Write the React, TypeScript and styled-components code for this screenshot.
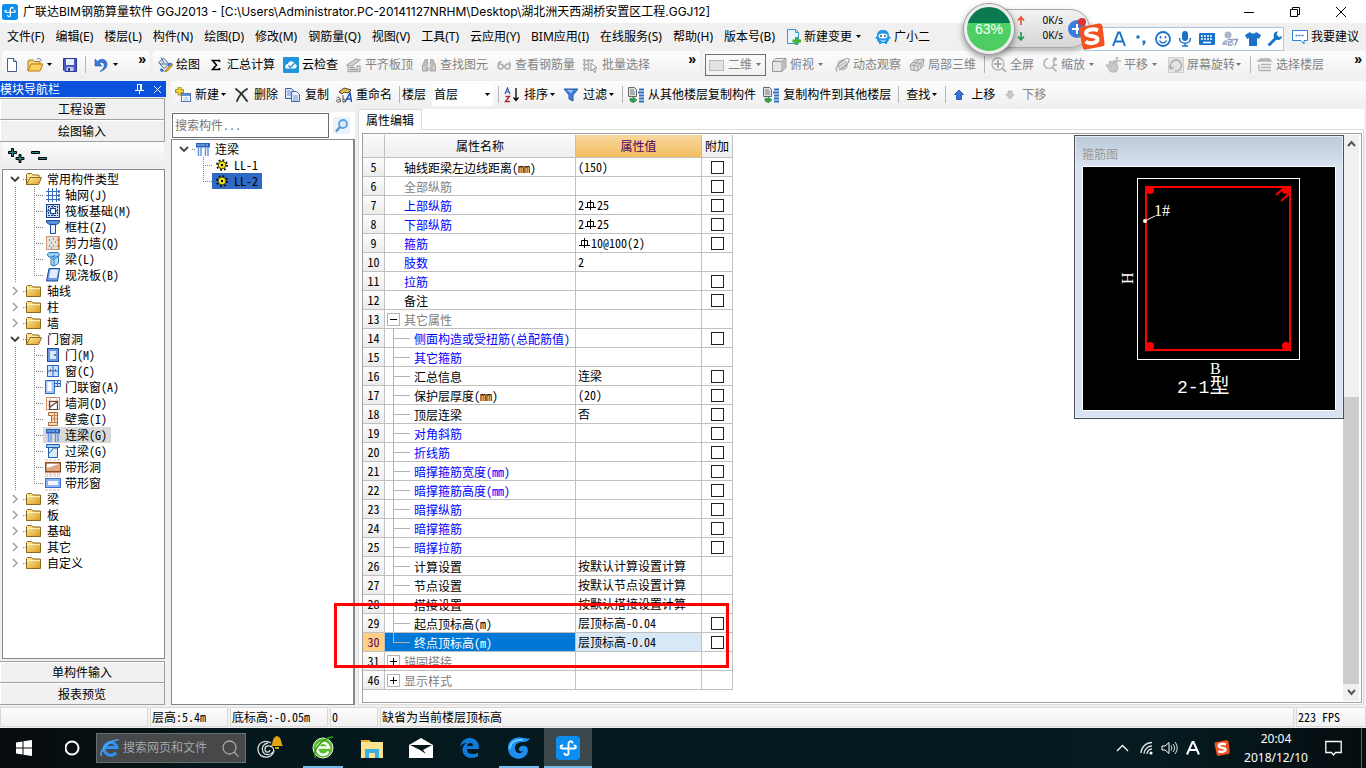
import React from 'react';
import styled, { createGlobalStyle, css } from 'styled-components';

const song = '"Noto Sans Mono CJK SC", "Noto Sans CJK SC", sans-serif';
const ui = '"Noto Sans", "Noto Sans CJK SC", sans-serif';
const caption = 'Inter, "Noto Sans CJK SC", sans-serif';

const GlobalStyle = createGlobalStyle`
  * { box-sizing: border-box; }
  body { margin: 0; background: #f0f0f0; font: 12px/16px ${ui}; color: #000; }
  button { font: inherit; color: inherit; background: none; border: 0; padding: 0; margin: 0; white-space: nowrap; }
  input, select { font: inherit; color: inherit; margin: 0; }
  ul { list-style: none; margin: 0; padding: 0; }
  svg { display: block; flex: none; }
`;

/* ---------- shell ---------- */
const Window = styled.div`
  position: relative; display: flex; flex-direction: column; height: 100vh; min-height: 768px; overflow: hidden;
`;
const TitleBar = styled.header`
  display: flex; align-items: center; height: 23px; padding: 0 2px; background: #fff; white-space: nowrap;
`;
const Title = styled.h1`
  flex: 1; margin: 0 0 0 5px; font: 400 12px/22px ${caption};
`;
const WindowButton = styled.button`
  display: flex; align-items: center; justify-content: center; width: 46px; height: 22px;
`;
const MenuBar = styled.nav`
  display: flex; align-items: center; gap: 11px; height: 27px; padding: 0 7px; white-space: nowrap;
`;
const MenuButton = styled.button<{ $push?: boolean }>`
  display: flex; align-items: center; gap: 3px; height: 22px;
  ${p => p.$push && 'margin-left: auto;'}
`;
const ToolbarRow = styled.div`
  display: flex; gap: 3px; height: 31px; padding: 1px 0 3px 2px;
`;
const Toolbar = styled.div<{ $basis?: number; $gap?: number; $pad?: number }>`
  display: flex; align-items: center; min-width: 0; overflow: hidden; white-space: nowrap;
  flex: ${p => (p.$basis ? `0 1 ${p.$basis}px` : '1')};
  gap: ${p => p.$gap ?? 8}px; padding: 0 4px 0 ${p => p.$pad ?? 4}px;
  background: linear-gradient(#fdfdfd, #efefef); border-radius: 3px;
`;
const ToolButton = styled.button<{ $gap?: number; $off?: boolean }>`
  display: flex; align-items: center; flex: none; gap: ${p => p.$gap ?? 3}px; height: 22px;
  color: ${p => (p.$off ? '#838383' : '#000')};
`;
const ViewMode = styled(ToolButton)`
  width: 61px; padding-left: 3px; border: 1px solid #6d6d6d; margin-right: -3px;
`;
const Divider = styled.i<{ $pull?: number }>`
  flex: none; width: 1px; height: 17px; background: #b5b5b5; margin-right: -${p => p.$pull ?? 3}px;
`;
const More = styled.button`
  align-self: flex-start; margin-left: auto; font: 700 14px/16px "Liberation Sans", sans-serif;
`;
const CaretBox = styled.i<{ $w: number }>`
  display: flex; flex: none; justify-content: center; width: ${p => p.$w}px; margin-left: -${p => (p.$w > 10 ? 3 : 4)}px;
`;
const Body = styled.div`
  display: flex; flex: 1; min-height: 0;
`;

/* ---------- left navigation ---------- */
const NavPanel = styled.aside`
  display: flex; flex-direction: column; flex: 0 0 166px; margin-right: 5px; font-family: ${song};
`;
const NavTitle = styled.div`
  display: flex; align-items: center; height: 16px; margin-bottom: 1px; color: #fff; background: #0a52dc;
  span { flex: 1; } button { width: 18px; display: flex; justify-content: center; }
`;
const NavButton = styled.button`
  flex: none; height: 22px; margin-right: 1px; line-height: 18px;
  border: 1px solid #a0a0a0; border-width: 1px 1px 1px 0; box-shadow: inset 1px 1px #fff; background: #f0f0f0;
  & + & { border-top: 0; }
`;
const NavTools = styled.div`
  display: flex; gap: 6px; align-items: center; flex: none; height: 26px; padding: 0 6px; margin: 0 2px;
  background: linear-gradient(#fcfcfc, #ececec);
`;
const TreeBox = styled.div`
  flex: 1; min-height: 0; margin: 1px 1px 2px 2px; padding-top: 1px; border: 1px solid #828790; background: #fff; overflow: hidden;
`;
const dotsY = 'repeating-linear-gradient(#808080 0 1px, transparent 1px 2px)';
const dotsX = 'repeating-linear-gradient(90deg, #808080 0 1px, transparent 1px 2px)';
const TreeRow = styled.li`
  display: flex; align-items: center; height: 16px; white-space: nowrap;
`;
const Toggle = styled.button`
  display: flex; align-items: center; justify-content: center; width: 20px; height: 16px; padding-left: 3px;
`;
const Stub = styled.i`
  width: 3px; height: 1px; background: ${dotsX};
`;
const Trunk = styled.i`
  width: 20px; height: 16px; background: ${dotsY} 12px 0 / 1px 16px no-repeat;
`;
const Branch = styled.i<{ $last?: boolean }>`
  width: 20px; height: 16px;
  background: ${dotsY} 11px 0 / 1px ${p => (p.$last ? 8 : 16)}px no-repeat, ${dotsX} 11px 8px / 9px 1px no-repeat;
`;
const TreeLabel = styled.button<{ $gap?: number; $bg?: string }>`
  display: flex; align-items: center; gap: ${p => p.$gap ?? 4}px; height: 16px; line-height: 16px; padding: 0 4px 0 2px;
  background: ${p => p.$bg ?? 'none'};
`;
const FolderLabel = styled(TreeLabel)`
  padding-left: 0;
`;

/* ---------- component list ---------- */
const Work = styled.main`
  position: relative; display: flex; flex-direction: column; flex: 1; min-width: 0;
`;
const WorkTools = styled.div`
  display: flex; height: 27px; flex: none; margin-bottom: 4px;
`;
const FloorLabel = styled.label`
  display: flex; align-items: center; gap: 6px; margin: 0 -2px 0 0;
`;
const FloorSelect = styled.select`
  appearance: none; width: 61px; height: 22px; padding: 0 2px; border: 0; border-radius: 0;
  background: #fff;
`;
const FloorWrap = styled.span`
  display: grid; align-items: center;
  > * { grid-area: 1 / 1; } > svg { justify-self: end; margin-right: 2px; pointer-events: none; }
`;
const Panels = styled.div`
  display: flex; flex: 1; min-height: 0;
`;
const ListPanel = styled.section`
  display: flex; flex-direction: column; flex: 0 0 184px; margin-right: 3px; font-family: ${song};
`;
const SearchRow = styled.div`
  display: flex; align-items: center; height: 27px; padding: 1px 0 1px 1px; background: #fff; gap: 4px;
`;
const SearchInput = styled.input`
  width: 157px; height: 25px; padding: 0 2px 3px; border: 1px solid #6e6e6e; border-radius: 0; outline: 0;
  &::placeholder { color: #767676; }
`;
const ListBox = styled.div`
  flex: 1; padding-top: 1px; border: 1px solid #828790; border-right-width: 2px; background: #fff;
`;

/* ---------- property editor ---------- */
const PropPanel = styled.section`
  display: flex; flex-direction: column; flex: 1; min-width: 0; margin-right: 2px; font-family: ${song};
`;
const Tabs = styled.div`
  display: flex; height: 20px; flex: none; margin-top: -3px;
`;
const Tab = styled.button`
  width: 64px; height: 21px; line-height: 18px; border: 1px solid #dcdcdc; border-bottom: 0; background: #fff; z-index: 1;
`;
const TabFill = styled.i`
  flex: 1; background: #fff;
`;
const TabPage = styled.div`
  display: flex; flex: 1; min-height: 0; padding: 3px 1px 1px 3px; border: 1px solid #dcdcdc; background: #fff;
`;
const GridBox = styled.div`
  display: flex; justify-content: space-between; flex: 1; padding: 1px 2px 1px 0; border: 1px solid #a0a0a0; overflow: hidden;
`;
const Table = styled.table`
  table-layout: fixed; width: 370px; height: 1px; border-collapse: separate; border-spacing: 0; flex: none; white-space: nowrap;
  td, th { height: 19px; padding: 0; line-height: 16px; font-weight: 400; border: solid #c0c0c0; border-width: 0 1px 1px 0; overflow: hidden; }
  thead th { height: 23px; background: linear-gradient(#fafafa, #efefef); }
`;
const ActiveHead = styled.th`
  && { background: linear-gradient(#f8d7a0, #f2bf60); color: #4c0060; }
`;
const RowHead = styled.th<{ $on?: boolean }>`
  ${p => (p.$on ? css`background: #ffcf85; color: #5a0060;` : css`background: linear-gradient(#fcfcfc, #ececec);`)}
`;
const NameCell = styled.td<{ $tone?: string; $on?: boolean }>`
  color: ${p => (p.$on ? '#fff' : p.$tone)};
  background: ${p => (p.$on ? '#0078d7' : '#fff')};
`;
const NameFlow = styled.div`
  display: flex; align-items: center; height: 18px; padding-top: 1px;
`;
const line = 'linear-gradient(#b4b4b4, #b4b4b4)';
const Indent = styled.i<{ $kind: 'none' | 'mid' | 'last' }>`
  flex: none; align-self: stretch; margin-top: -1px; width: ${p => (p.$kind === 'none' ? 19 : 29)}px;
  ${p => p.$kind !== 'none' && css`
    background: ${line} 8px 0 / 1px ${p.$kind === 'last' ? '10px' : '100%'} no-repeat, ${line} 8px 9px / 17px 1px no-repeat;
  `}
`;
const Expander = styled.button`
  flex: none; display: flex; align-items: center; justify-content: center; width: 13px; height: 13px;
  margin: 0 4px 0 2px; border: 1px solid #b4b4b4; background: #fff;
`;
const ValueCell = styled.td<{ $on?: boolean }>`
  background: ${p => (p.$on ? '#d9e8f7' : '#fff')};
  > div { display: flex; align-items: center; height: 18px; padding: 0 0 1px 2px; }
`;
const CheckCell = styled.td`
  background: #fff; text-align: center;
`;
const Check = styled.input`
  appearance: none; display: block; width: 13px; height: 13px; margin: 0 auto; border: 1px solid #222; background: #fff;
`;
const Scroll = styled.div`
  display: flex; flex-direction: column; width: 16px; background: #f0f0f0;
  button { display: flex; align-items: center; justify-content: center; height: 17px; }
`;
const ScrollGap = styled.i`flex: 245;`;
const ScrollThumb = styled.i`flex: 286; background: #cdcdcd;`;

/* ---------- floating pieces ---------- */
const StirrupWindow = styled.section`
  position: absolute; right: 22px; top: 54px; width: 270px; height: 284px; padding: 0 6px 7px 7px;
  display: flex; flex-direction: column; border: 1px solid #4a4f57; background: linear-gradient(#bccad9, #d8e3f1 32px);
  box-shadow: inset 0 0 0 1px #e6eef8;
  h2 { margin: 0; height: 30px; padding-top: 10px; font-size: 12px; line-height: 18px; font-weight: 400; color: #999; }
`;
const Highlight = styled.div`
  position: absolute; left: 163px; top: 522px; width: 395px; height: 65px; border: 3px solid #f00; pointer-events: none;
`;
const SpeedBall = styled.div`
  position: absolute; right: 276px; top: 3px; display: flex; align-items: center; width: 126px; height: 50px;
`;
const SpeedPill = styled.div`
  display: flex; align-items: center; justify-content: space-between; flex: 1; height: 39px; margin: 0 0 0 -28px; padding: 0 2px 0 30px;
  border: 1px solid #a6a6a6; border-radius: 20px; background: linear-gradient(#f2f2f2, #d6d6d6); box-shadow: 0 3px 6px #0004;
  font-size: 10px; line-height: 15px;
`;
const SpeedRows = styled.div`
  display: grid; grid-template-columns: 20px 26px; text-align: right; align-items: center;
`;
const Ball = styled.div`
  z-index: 1; display: flex; align-items: center; justify-content: center; flex: none; width: 50px; height: 50px; margin-top: 1px;
  border: 3px solid #eceeee; border-radius: 50%; color: #fff; font: 14px/16px "Liberation Sans", sans-serif;
  background: linear-gradient(#0b7a51 0 36%, #4bd267 36%, #4ecb61); box-shadow: 0 0 0 1px #9a9a9a, 0 3px 6px 1px #0006;
`;
const ImeBar = styled.div`
  position: absolute; right: 82px; top: 27px; display: flex; align-items: center; gap: 6px; width: 200px; height: 24px;
  padding-left: 26px; border: 1px solid #aac6de; background: #fff;
`;
const ImeLogo = styled.i`
  position: absolute; left: -7px; top: -5px;
`;

/* ---------- status and taskbar ---------- */
const StatusBar = styled.footer`
  display: flex; gap: 2px; flex: none; height: 23px; padding: 2px 0 1px; font-family: ${song}; white-space: nowrap;
`;
const StatusCell = styled.div<{ $w?: number }>`
  flex: ${p => (p.$w ? `0 0 ${p.$w}px` : '1')}; padding-left: 1px; line-height: 18px; border: 1px solid #d8d8d8;
  background: linear-gradient(#fcfcfc, #f1f1f1);
`;
const TaskBar = styled.footer`
  display: flex; align-items: center; flex: none; height: 40px; color: #fff;
  background: linear-gradient(90deg, #080b0d, #04181c 240px, #051b20 85%, #060d10);
`;
const TaskButton = styled.button<{ $on?: boolean; $run?: boolean }>`
  display: flex; align-items: center; justify-content: center; width: 48px; height: 40px; margin-right: 1px;
  background: ${p => (p.$on ? '#3a484c' : 'none')};
  ${p => p.$run && css`
    background-image: linear-gradient(#76b9ed, #76b9ed); background-repeat: no-repeat;
    background-position: 50% 38px; background-size: ${p.$on ? 48 : 40}px 2px;
  `}
`;
const TaskSearch = styled.label`
  display: flex; align-items: center; gap: 3px; width: 150px; height: 30px; margin: 0 4px 0 -2px; padding: 0 6px 0 3px;
  border: 1px solid #657173; background: #464849;
  input { flex: 1; min-width: 0; border: 0; background: none; outline: 0; padding: 0; }
  input::placeholder { color: #a4a6a7; opacity: 1; }
`;
const Tray = styled.div`
  display: flex; align-items: center; margin-left: auto; height: 40px; padding-right: 4px;
`;
const TrayButton = styled.button<{ $w: number }>`
  display: flex; align-items: center; justify-content: center; width: ${p => p.$w}px; height: 40px;
`;
const Clock = styled.time`
  width: 78px; margin-right: 2px; text-align: center; line-height: 19px;
`;
const DesktopEdge = styled.i`
  width: 1px; height: 40px; margin-left: 12px; background: #5b6468;
`;

/* ---------- icons ---------- */
const Svg = ({ w = 16, h = w, box, children }: { w?: number; h?: number; box?: string; children: React.ReactNode }) => (
  <svg width={w} height={h} viewBox={box ?? `0 0 ${w} ${h}`} fill="none" aria-hidden="true">{children}</svg>
);
const Caret = ({ w = 12, off }: { w?: number; off?: boolean }) => (
  <CaretBox $w={w}><Svg w={5} h={3}><path d="M0 0h5L2.5 3z" fill={off ? '#777' : '#000'} /></Svg></CaretBox>
);
const AppLogo = ({ size = 16 }: { size?: number }) => (
  <Svg w={size} box="0 0 24 24">
    <rect width="24" height="24" rx="4" fill="#0c8ef0" />
    <path d="M12.500 17.500V8c0-3 3-3.500 4-1.500M6.500 12.500h12M12.500 17c0 2.500-3.500 2.500-4 .5M6.500 12.500C4 12.500 4 9.500 6.500 9.500M18 12.500c2.500 0 2.500-2.500.5-3" stroke="#fff" strokeWidth="1.900" strokeLinecap="round" />
  </Svg>
);
const SogouLogo = ({ size = 27 }: { size?: number }) => (
  <Svg w={size} box="0 0 27 27">
    <path d="M3 4 21 .5q3-.5 3.500 2.500L26.500 20q.5 3-2.500 3.500L8 26.500q-3 .5-3.500-2.500L1 7Q.500 4.500 3 4z" fill="#f4511e" />
    <path d="M20 7.500C15 5 7.500 7 8 10.500c.5 3.500 11 1.500 11.500 5.500.4 4-8 5.500-12 2.500" stroke="#fff" strokeWidth="4" />
  </Svg>
);
const I = {
  newDoc: <Svg><path d="M3.500 1.500h6l3 3v10h-9z" fill="#fff" stroke="#4a5f86" /><path d="M9.500 1.500v3h3" fill="#cfe0f5" stroke="#4a5f86" /></Svg>,
  open: <Svg><path d="M1 14V4l1-1h4l1.500 1.500H13V7" fill="#f6d378" stroke="#b27c1b" /><path d="M1 14 4 7h12l-3 7z" fill="#fbd15f" stroke="#b27c1b" /><path d="M10 2c2-1 4 0 4.500 2" stroke="#4a74b8" /></Svg>,
  save: <Svg><path d="M1.500 1.500h13v13H3l-1.500-1.500z" fill="#4b59c5" stroke="#2d3792" /><rect x="4" y="2" width="8" height="6" fill="#e9eefb" /><rect x="4.500" y="10" width="7" height="4" fill="#c6cce8" /><rect x="6" y="11" width="2" height="3" fill="#2d3792" /></Svg>,
  undo: <Svg><path d="M2 2v7h7L6.500 6.500C9 4 12 6 11 9.500c-.5 2-2 3.500-4 5 4-1 7.500-4 7-8C13 1.500 7.500 1 4.500 4.500z" fill="#3a78d8" stroke="#2459ae" strokeWidth=".6" /></Svg>,
  paint: <Svg><path d="m1.500 5.500 5-4.500 5.500 6-5 4.500z" fill="#dfe8f4" stroke="#53698d" /><path d="M4 .500l3 5.500M3 7h8" stroke="#53698d" /><path d="m14.500 6-5 6-2 3 3.500-1.500L16 8z" fill="#e9b232" stroke="#8b6412" strokeWidth=".7" /><path d="M11 6c3-1 4 1 3 2l-2 2c-1-1-1-2-1-4z" fill="#3875cf" /><path d="M3 12c2-1 4 0 4 2l-2 1c-1 0-2-1-2-3z" fill="#3875cf" /></Svg>,
  sigma: <Svg><path d="M11.500 5V3.500H4.500L8.500 8l-4 4.500h7V11" stroke="#000" strokeWidth="1.600" /></Svg>,
  cloud: <Svg><rect width="16" height="16" rx="1" fill="#1f95dc" /><path d="M3 11.500c-2-2 0-5 2-4.500 1-4 6-3 6.500 0 3 0 3 4 0 4.500z" fill="#fff" /><path d="m5.500 8.500 2 2 3.500-4" stroke="#1f95dc" strokeWidth="1.500" /></Svg>,
  slab: <Svg><path d="m1 8 9-6 4 1-8 6zM2 9v5.500h12V9h-3v3" fill="#d6d6d6" stroke="#b0b0b0" strokeWidth="1.300" /><path d="M4 10.500h5M4 12.500h8" stroke="#9a9a9a" /></Svg>,
  binoc: <Svg><path d="M4 2.500h2.500V5L7 7v7H1.500V9zM12 2.500H9.500V5L9 7v7h5.500V9z" fill="#bcbcbc" stroke="#a8a8a8" /><path d="M7 7h2v3H7zM3 9.500v3M13 9.500v3" stroke="#eee" /></Svg>,
  glasses: <Svg><path d="M7 9.500a2.500 2.500 0 1 0-5 0 2.500 2.500 0 0 0 5 0zm7 0a2.500 2.500 0 1 0-5 0 2.500 2.500 0 0 0 5 0zM7 9h2M2 9.500c0-3 1.500-5 3.500-5M14 9.500c0-2 .5-4-1-5" stroke="#ababab" strokeWidth="1.400" /></Svg>,
  batch: <Svg><path d="M1.500 2v12M5.500 2v12M0 3.500h10M0 7.500h6M0 11.500h6M9.500 2v3" stroke="#adadad" strokeWidth="1.400" /><path d="m8 6 6 5-3 .5 2 3-1.500 1-2-3.500L8 14z" fill="#fff" stroke="#8f8f8f" /></Svg>,
  rect2d: <Svg><rect x=".5" y="3.500" width="14" height="10" fill="#e2e2e2" stroke="#b9b9b9" /></Svg>,
  cube: <Svg><path d="M1.500 4.500 5 1.500h10v9l-4 4h-9.500z" fill="#e5e5e5" stroke="#999" /><path d="M1.500 4.500H11v10M11 4.500l4-3" stroke="#999" /><path d="M11.500 5 15 2v8l-3.500 4z" fill="#bbb" /></Svg>,
  orbit: <Svg><circle cx="8.500" cy="8" r="5.500" fill="#c4c4c4" /><path d="M3.500 14C-2 13 9 1 14 1.500c4 .5-2 9-9 11.500" stroke="#a2a2a2" strokeWidth="1.200" /><path d="M5 8l6-4M6 11l6-5" stroke="#eee" /></Svg>,
  cube3: <Svg><path d="m1 8 5-5 9-1-1 7-5 5-7-1z" fill="#e0e0e0" stroke="#a0a0a0" /><path d="m1 8 8 1 6-7M9 9v5M5 8.500l5-6M3.500 5.500 12 6.500v5M5 8.500v5" stroke="#a0a0a0" /></Svg>,
  full: <Svg><circle cx="7" cy="7" r="6" stroke="#b0b0b0" strokeWidth="1.300" /><path d="M7 3v8M3 7h8M11.500 11.500l3.500 3.500" stroke="#a0a0a0" strokeWidth="1.600" /></Svg>,
  zoom: <Svg><circle cx="7" cy="6.500" r="5" stroke="#b5b5b5" strokeWidth="1.600" strokeDasharray="22 5" /><path d="m10.500 10.500 4 4M11 2h4M13 0v4M11 8h4" stroke="#b0b0b0" strokeWidth="1.600" /></Svg>,
  pan: <Svg><path d="M1 8c2-1 3 1 4 1l-1-4 2-1 2 3V4h2l1 4c3 0 2 5 0 7H6z" fill="#c9c9c9" stroke="#b5b5b5" /><path d="M12 0v8M8.500 4H16M10.500 1.500 12 0l1.500 1.500" stroke="#a8a8a8" /></Svg>,
  rotate: <Svg><rect x=".5" y=".5" width="15" height="15" fill="#e3e3e3" stroke="#d0d0d0" /><path d="M3 11a5.500 5.500 0 1 1 4 3M1 9l2 3 3-2" stroke="#aaa" strokeWidth="1.400" /></Svg>,
  floors: <Svg><path d="m1 4 3-2h8l2 2zM4 7.500h10M4 10.500h10M3 13.500h11M2 7.500V14" fill="#ccc" stroke="#b0b0b0" strokeWidth="1.400" /></Svg>,
  add: <Svg><rect x="6.500" y="6.500" width="9" height="8" fill="#fff" stroke="#5078b4" /><path d="M7 8h8" stroke="#5b92d8" strokeWidth="2" /><path d="M8 11h6M8 13h6M11 9v5" stroke="#b3c9e6" /><path d="M3 0h3v2.500h2.500v3H6V8H3V5.500H.500v-3H3z" fill="#f2d33b" stroke="#93791c" strokeWidth=".8" /></Svg>,
  del: <Svg><path d="M2 2c4 3 8 7 11 12M13 2C8 5 5 9 3 14" stroke="#333" strokeWidth="1.900" strokeLinecap="round" /></Svg>,
  copy: <Svg><path d="M.500 1.500h6l2 2v8h-8z" fill="#dce9fb" stroke="#3a62a8" /><path d="M6.500 4.500h5l3 3v7h-8z" fill="#eaf2fd" stroke="#3a62a8" /><path d="M8 9h5M8 11h5M8 13h5M2 4h3M2 6h4M2 8h4" stroke="#6a94d6" /></Svg>,
  rename: <Svg><path d="M3 5 8 1l7 2-3 3-4-1-2 2z" fill="#e7bc54" stroke="#4e4423" /><path d="M.500 11c3-2 4 0 4 4M4.500 13c-3-1-4 0-4 1s3 2 4 0M7 8v7c3 1 3-4 0-3" stroke="#555" /><path d="m9 15 5-9 1.500 9M11 12h4" stroke="#1f4fb2" strokeWidth="1.500" /></Svg>,
  sort: <Svg><path d="m1 7 2.500-6L6 7M2 5h3" stroke="#2f5aa8" strokeWidth="1.200" /><path d="M1.500 9.500h4l-4 5h4.500" stroke="#a82a2a" strokeWidth="1.400" /><path d="M12 1v12M9.500 10.500l2.500 3 2.500-3" stroke="#000" strokeWidth="1.300" /></Svg>,
  filter: <Svg><path d="M1 2h14L10 8v6l-4-2V8z" fill="#4480dc" stroke="#2455a8" /><path d="M4 3h6L8 6z" fill="#a9cbfa" /></Svg>,
  copyFrom: <Svg><path d="M.500.5h6l2 2v7h-8z" fill="#e4e4e4" stroke="#666" /><path d="M2 3h4M2 5h5M2 7h5" stroke="#777" /><path d="M2 11v2c0 2 2 2 3 2v1l4-3-4-3v2z" fill="#30a350" stroke="#19733a" strokeWidth=".6" /><path d="M11 2.500h5M10 5.500h6M11 8.500h5M11 11.500h5M11 14.500h5" stroke="#2f6fc0" strokeWidth="1.800" /></Svg>,
  up: <Svg><path d="m8 3 4.500 4.500H10.500v5h-5v-5H3.500z" fill="#3672dd" stroke="#1c469c" strokeWidth=".8" /></Svg>,
  down: <Svg><path d="m8 12 4-4.500h-2V4H6v3.500H4z" fill="#c9c9c9" stroke="#b2b2b2" strokeWidth=".8" /></Svg>,
  change: <Svg w={15} h={16}><path d="M1.500.5h8l3 3v11h-11z" fill="#e8f5fd" stroke="#3597d3" /><path d="M9.500.5v3h3" stroke="#3597d3" /><path d="M9 8h3v2.500h3v3h-3V16H9v-2.500H6.500v-3H9z" fill="#49b22d" /></Svg>,
  mascot: <Svg><path d="M2 7C2 2 5 1 8 1s6 1 6 6l2 2-2 1c0 2-1 3-2 3.500V15h-2v-1H6v1H4v-1.500C3 13 2 12 2 10L0 9z" fill="#1e96e4" /><ellipse cx="8" cy="7" rx="4.500" ry="2.500" fill="#fff" /><path d="M6 6v2M10 6v2" stroke="#124a78" strokeWidth="1.400" /><path d="M5.500 11c1 1.500 4 1.500 5 0" stroke="#fff" /></Svg>,
  bubble: <Svg><path d="M.5 1.500h15v10H12v3.500l-3-3.500H.5z" fill="#fff" stroke="#2f7fd8" /><path d="M3.500 6.500h2m1 0h2m1 0h2" stroke="#2f7fd8" strokeWidth="1.500" /></Svg>,
  folder: <Svg><path d="M.5 13.500v-10l1-1h4l1.500 1.500h7.500v9.500z" fill="url(#fold)" stroke="#8c6a1b" /><path d="M1 5.500h13" stroke="#fff3b5" /></Svg>,
  folderOpen: <Svg><path d="M.5 13.500v-10l1-1h4l1.500 1.500h6v3" fill="#fbe59a" stroke="#8c6a1b" /><path d="m.5 13.500 3.500-7h11.500l-3 7z" fill="url(#fold)" stroke="#8c6a1b" /></Svg>,
  grid: <Svg><path d="M3.500 1v14M7.500 1v14M11.500 1v14M1 4.500h12M1 8.500h12M1 12.500h12" stroke="#3a6dc0" /><path d="M13.500 3.500h1v2h-1zM13.500 7.500h1v2h-1zM13.500 11.500h1v2h-1z" stroke="#3a6dc0" /></Svg>,
  raft: <Svg><rect x="1.500" y="1.500" width="13" height="13" fill="#cfe0f6" stroke="#163f86" /><rect x="5.500" y="5.500" width="5" height="5" fill="#fff" stroke="#163f86" /><path d="M3.500 3v10M12.500 3v10M3 3.500h10M3 12.500h10M8 1v4M8 11v4M1 8h4M11 8h4" stroke="#163f86" strokeDasharray="2 1" /></Svg>,
  column: <Svg><path d="M1.500 1.500h13v2l-3 2h-7l-3-2z" fill="#5a8fe0" stroke="#1e4a9c" /><path d="M5.500 5.500h5v9h-5z" fill="#eaf2fd" stroke="#1e4a9c" /></Svg>,
  shear: <Svg><rect x="1.500" y="1.500" width="12" height="13" fill="#e6e1da" stroke="#c99a80" /><path d="M4 5h1M8 4h1M6 8h1M10 7h1M4 11h1M8 11h1M6 13h1" stroke="#444" /><path d="M14 1v14M12 5h3M12 11h3" stroke="#d97b28" strokeWidth="1.300" /></Svg>,
  beam: <Svg><path d="m2 3.500 2 2.500h9l1.500-2.500L13 1.500H4z" fill="#9fcdf2" stroke="#2375bd" /><path d="m5 8 5-4M6 14V9l3-2v8zM9.500 8l4-3v7l-4 3" fill="#b6dcf7" stroke="#2375bd" /></Svg>,
  plate: <Svg><path d="M4 1.500h10.500l-2 12.500h-11z" fill="#6f9ce4" stroke="#1d4c9f" /><path d="M5.500 2.500h8l-2 8.500H4z" fill="#e3eefc" /></Svg>,
  door: <Svg><rect x="2.500" y="1.500" width="11" height="13" fill="#6a9ae4" stroke="#1d4c9f" /><rect x="5" y="4" width="6" height="8" fill="#dbe8fb" /><path d="M10 7v2" stroke="#000" /></Svg>,
  window: <Svg><rect x="2.500" y="2.500" width="11" height="11" fill="#cfe2fb" stroke="#2c66c4" /><path d="M8 2v12M2 8h12" stroke="#2c66c4" /><path d="M5 7h1M10 7h1" stroke="#000" /></Svg>,
  doorWin: <Svg><path d="M.500 1.500h9v13h-9z" fill="#a9c7f3" stroke="#2c66c4" /><rect x="2.500" y="3" width="4" height="9" fill="#fff" /><path d="M9.500 1.500h6v6h-6zM12.500 1v7M9 4.500h7" fill="#dbe8fb" stroke="#2c66c4" /></Svg>,
  hole: <Svg><rect x="1.500" y="2.500" width="13" height="12" fill="#fff" stroke="#cf8a62" /><path d="M1 6h14M5 2v12M1 10h4M12 2v4" stroke="#e4ac8c" /><path d="M4.500 6.500h8v8h-8zM5 12l7-5" stroke="#5d4532" strokeWidth="1.200" /></Svg>,
  niche: <Svg><path d="M3.500 1.500h9v13h-9v-3h3v-7h-3z" fill="#f4dfc9" stroke="#b3672d" /><path d="M7 4.500h5M7 8h5M7 11.500h5M9.500 2v10" stroke="#c98450" /></Svg>,
  link: <Svg><path d="M1 2h14v4.500H1z" fill="#2b63bd" /><path d="M2 4h12M4 3v3M8 3v3M12 3v3" stroke="#8fb8ef" strokeDasharray="2 1" /><path d="M3.500 6.500V15M6 6.500V15M10.500 6.500V15M13 6.500V15" stroke="#5f92de" strokeWidth="1.400" /></Svg>,
  lintel: <Svg><path d="M1.500 1.500h13v3h-13z" fill="#a8cbf2" stroke="#1f5caa" /><path d="M3.500 4.500h9v10h-9z" fill="#dceafa" stroke="#1f5caa" /><path d="M4 10c2-1 3-3 4-4M7 5h5" stroke="#1f5caa" /></Svg>,
  bandHole: <Svg><path d="M0 1h16M0 15h16" stroke="#f9c9bc" strokeDasharray="3 1" strokeWidth="1.500" /><rect x=".8" y="3.800" width="14.500" height="9" fill="#fff" stroke="#8a4415" strokeWidth="1.500" /><path d="M2 9 14 5v7H2z" fill="#dba785" /></Svg>,
  bandWin: <Svg><path d="M0 1h16M0 15h16" stroke="#f9c9bc" strokeDasharray="3 1" strokeWidth="1.500" /><rect x=".5" y="3.500" width="15" height="9" fill="#8fb2f0" stroke="#3a6fd0" /><rect x="3" y="6" width="10" height="4" fill="#f2f7ff" /></Svg>,
  gear: <Svg><circle cx="8" cy="8" r="5" stroke="#000" strokeWidth="1.800" strokeDasharray="1.700 2.227" /><circle cx="8" cy="8" r="3.800" fill="#f6ea1f" stroke="#4e4a00" /><circle cx="8" cy="8" r="1.200" fill="#000" /></Svg>,
};
const Chevron = ({ open }: { open?: boolean }) => (
  <Svg w={10}>{open ? <path d="m1 3 4 4 4-4" stroke="#404040" strokeWidth="1.800" /> : <path d="m3 1 4 4-4 4" stroke="#a6a6a6" strokeWidth="1.600" />}</Svg>
);
const RebarSign = () => (
  <Svg w={13} h={12}><path d="M6.500 1v10M3.500 3.500h6v5h-6zM1 8.500h11" stroke="#000" /></Svg>
);

/* ---------- data ---------- */
type Kid = [string, React.ReactNode];
const tree: { name: string; kids?: Kid[] }[] = [
  { name: '常用构件类型', kids: [['轴网(J)', I.grid], ['筏板基础(M)', I.raft], ['框柱(Z)', I.column], ['剪力墙(Q)', I.shear], ['梁(L)', I.beam], ['现浇板(B)', I.plate]] },
  { name: '轴线' }, { name: '柱' }, { name: '墙' },
  { name: '门窗洞', kids: [['门(M)', I.door], ['窗(C)', I.window], ['门联窗(A)', I.doorWin], ['墙洞(D)', I.hole], ['壁龛(I)', I.niche], ['连梁(G)', I.link], ['过梁(G)', I.lintel], ['带形洞', I.bandHole], ['带形窗', I.bandWin]] },
  { name: '梁' }, { name: '板' }, { name: '基础' }, { name: '其它' }, { name: '自定义' },
];

const K = '#000', B = '#00f', G = '#808080';
type Prop = { n: number; name: string; tone: string; value?: React.ReactNode; check?: boolean; kind?: 'group+' | 'group-' | 'child' };
const child = (n: number, name: string, tone: string, check: boolean, value?: string): Prop => ({ n, name, tone, check, value, kind: 'child' });
const props: Prop[] = [
  { n: 5, name: '轴线距梁左边线距离(mm)', tone: K, value: '(150)', check: true },
  { n: 6, name: '全部纵筋', tone: G, check: true },
  { n: 7, name: '上部纵筋', tone: B, value: <>2<RebarSign />25</>, check: true },
  { n: 8, name: '下部纵筋', tone: B, value: <>2<RebarSign />25</>, check: true },
  { n: 9, name: '箍筋', tone: B, value: <><RebarSign />10@100(2)</>, check: true },
  { n: 10, name: '肢数', tone: B, value: '2' },
  { n: 11, name: '拉筋', tone: B, check: true },
  { n: 12, name: '备注', tone: K, check: true },
  { n: 13, name: '其它属性', tone: G, kind: 'group-' },
  child(14, '侧面构造或受扭筋(总配筋值)', B, true),
  child(15, '其它箍筋', B, false),
  child(16, '汇总信息', K, true, '连梁'),
  child(17, '保护层厚度(mm)', K, true, '(20)'),
  child(18, '顶层连梁', K, true, '否'),
  child(19, '对角斜筋', B, true),
  child(20, '折线筋', B, true),
  child(21, '暗撑箍筋宽度(mm)', B, true),
  child(22, '暗撑箍筋高度(mm)', B, true),
  child(23, '暗撑纵筋', B, true),
  child(24, '暗撑箍筋', B, true),
  child(25, '暗撑拉筋', B, true),
  child(26, '计算设置', K, false, '按默认计算设置计算'),
  child(27, '节点设置', K, false, '按默认节点设置计算'),
  child(28, '搭接设置', K, false, '按默认搭接设置计算'),
  child(29, '起点顶标高(m)', K, true, '层顶标高-0.04'),
  child(30, '终点顶标高(m)', K, true, '层顶标高-0.04'),
  { n: 31, name: '锚固搭接', tone: G, kind: 'group+' },
  { n: 46, name: '显示样式', tone: G, kind: 'group+' },
];

const menus = ['文件(F)', '编辑(E)', '楼层(L)', '构件(N)', '绘图(D)', '修改(M)', '钢筋量(Q)', '视图(V)', '工具(T)', '云应用(Y)', 'BIM应用(I)', '在线服务(S)', '帮助(H)', '版本号(B)'];

/* ---------- sections ---------- */
const Tool = ({ icon, text, gap, off, caret }: { icon?: React.ReactNode; text: string; gap?: number; off?: boolean; caret?: number }) => (
  <ToolButton $gap={gap} $off={off}>{icon}{text}{caret && <Caret w={caret} off={off} />}</ToolButton>
);

const MainTools = () => (
  <ToolbarRow>
    <Toolbar $basis={148} $pad={2} $gap={7}>
      <ToolButton aria-label="新建">{I.newDoc}</ToolButton>
      <ToolButton aria-label="打开">{I.open}<Caret /></ToolButton>
      <ToolButton aria-label="保存">{I.save}</ToolButton>
      <Divider $pull={0} />
      <ToolButton aria-label="撤销">{I.undo}<Caret /></ToolButton>
      <More>»</More>
    </Toolbar>
    <Toolbar $basis={547}>
      <Tool icon={I.paint} text="绘图" />
      <Tool icon={I.sigma} text="汇总计算" />
      <Tool icon={I.cloud} text="云检查" />
      <Tool icon={I.slab} text="平齐板顶" off />
      <Tool icon={I.binoc} text="查找图元" off />
      <Tool icon={I.glasses} text="查看钢筋量" off />
      <Tool icon={I.batch} text="批量选择" off />
      <More>»</More>
    </Toolbar>
    <Toolbar $pad={2}>
      <ViewMode $off>{I.rect2d}二维<Caret off /></ViewMode>
      <Tool icon={I.cube} text="俯视" off caret={12} />
      <Tool icon={I.orbit} text="动态观察" off />
      <Tool icon={I.cube3} text="局部三维" off />
      <Divider $pull={2} />
      <Tool icon={I.full} text="全屏" off />
      <Tool icon={I.zoom} text="缩放" off caret={12} />
      <Tool icon={I.pan} text="平移" off caret={12} />
      <Tool icon={I.rotate} text="屏幕旋转" off caret={8} />
      <Divider $pull={2} />
      <Tool icon={I.floors} text="选择楼层" off />
      <More>»</More>
    </Toolbar>
  </ToolbarRow>
);

const ComponentTools = () => (
  <WorkTools>
    <Toolbar $gap={7}>
      <Tool icon={I.add} text="新建" gap={4} caret={8} />
      <Tool icon={I.del} text="删除" gap={4} />
      <Tool icon={I.copy} text="复制" gap={4} />
      <Tool icon={I.rename} text="重命名" gap={4} />
      <Divider $pull={5} />
      <FloorLabel>楼层
        <FloorWrap>
          <FloorSelect defaultValue="首层"><option>首层</option></FloorSelect>
          <Svg w={7} h={4}><path d="M1 0h5L3.500 3z" fill="#000" /></Svg>
        </FloorWrap>
      </FloorLabel>
      <Divider $pull={2} />
      <Tool icon={I.sort} text="排序" gap={4} caret={8} />
      <Tool icon={I.filter} text="过滤" gap={4} caret={8} />
      <Divider $pull={2} />
      <Tool icon={I.copyFrom} text="从其他楼层复制构件" gap={4} />
      <Tool icon={I.copyFrom} text="复制构件到其他楼层" gap={4} />
      <Divider $pull={0} />
      <Tool text="查找" gap={4} caret={8} />
      <Divider $pull={2} />
      <Tool icon={I.up} text="上移" gap={4} />
      <Tool icon={I.down} text="下移" gap={4} off />
    </Toolbar>
  </WorkTools>
);

const Navigation = () => (
  <NavPanel>
    <NavTitle>
      <span>模块导航栏</span>
      <button aria-label="固定"><Svg w={9} h={10}><path d="M2.500 1v5M6.500 1v5M2 .500h5M0 6.500h9M4.500 7v3M5.500 1v5" stroke="#fff" /></Svg></button>
      <button aria-label="关闭"><Svg w={9}><path d="m1 1 7 7M8 1 1 8" stroke="#fff" /></Svg></button>
    </NavTitle>
    <NavButton>工程设置</NavButton>
    <NavButton>绘图输入</NavButton>
    <NavTools>
      <button aria-label="全部展开"><Svg w={17} h={15}><path d="M.500 3.500h3v-3h2v3h3v2h-3v3h-2v-3h-3z" fill="#1b8f84" stroke="#000" /><path d="M8 9.500h3v-3h2v3h3v2h-3v3h-2v-3H8z" fill="#1b8f84" stroke="#000" /></Svg></button>
      <button aria-label="全部折叠"><Svg w={17} h={15}><path d="M.500 3.500h8v2h-8zM7.500 9.500h8v2h-8z" fill="#1b8f84" stroke="#000" /></Svg></button>
    </NavTools>
    <TreeBox>
      <ul>
        {tree.map(g => (
          <React.Fragment key={g.name}>
            <TreeRow>
              <Toggle aria-label={g.name}><Chevron open={!!g.kids} /></Toggle><Stub />
              <FolderLabel $gap={5}>{g.kids ? I.folderOpen : I.folder}{g.name}</FolderLabel>
            </TreeRow>
            {g.kids?.map(([name, icon], i) => (
              <TreeRow key={name}>
                <Trunk /><Branch $last={i === g.kids!.length - 1} />
                <TreeLabel $bg={name === '连梁(G)' ? '#d9d9d9' : undefined}>{icon}{name}</TreeLabel>
              </TreeRow>
            ))}
          </React.Fragment>
        ))}
      </ul>
    </TreeBox>
    <NavButton>单构件输入</NavButton>
    <NavButton>报表预览</NavButton>
  </NavPanel>
);

const ComponentList = () => (
  <ListPanel>
    <SearchRow>
      <SearchInput placeholder="搜索构件..." aria-label="搜索构件" />
      <button aria-label="搜索"><Svg w={17}><rect width="17" height="17" fill="#e9f3fc" /><circle cx="10" cy="7" r="4" fill="#d9ecfd" stroke="#5ba0dc" strokeWidth="1.800" /><path d="m7 10-4 4.500" stroke="#4d8fd0" strokeWidth="2.200" /></Svg></button>
    </SearchRow>
    <ListBox>
      <ul>
        <TreeRow>
          <Toggle aria-label="展开"><Chevron open /></Toggle><Stub />
          <FolderLabel>{I.link}连梁</FolderLabel>
        </TreeRow>
        <TreeRow><Toggle as="i" /><Branch /><TreeLabel>{I.gear}LL-1</TreeLabel></TreeRow>
        <TreeRow><Toggle as="i" /><Branch $last /><TreeLabel $bg="#316ac5">{I.gear}LL-2</TreeLabel></TreeRow>
      </ul>
    </ListBox>
  </ListPanel>
);

const PropertyEditor = () => (
  <PropPanel>
    <Tabs><Tab>属性编辑</Tab><TabFill /></Tabs>
    <TabPage>
      <GridBox>
        <div>
          <Table>
            <colgroup><col style={{ width: 22 }} /><col style={{ width: 191 }} /><col style={{ width: 126 }} /><col style={{ width: 31 }} /></colgroup>
            <thead><tr><th /><th>属性名称</th><ActiveHead>属性值</ActiveHead><th>附加</th></tr></thead>
            <tbody>
              {props.map(p => {
                const on = p.n === 30;
                return (
                  <tr key={p.n}>
                    <RowHead $on={on}>{p.n}</RowHead>
                    <NameCell $tone={p.tone} $on={on}>
                      <NameFlow>
                        {p.kind?.startsWith('group') ? (
                          <Expander aria-label={p.name}>
                            <Svg w={9}><path d={p.kind === 'group+' ? 'M1 4.500h7M4.500 1v7' : 'M1 4.500h7'} stroke="#000" /></Svg>
                          </Expander>
                        ) : <Indent $kind={p.kind !== 'child' ? 'none' : on ? 'last' : 'mid'} />}
                        {p.name}
                      </NameFlow>
                    </NameCell>
                    <ValueCell $on={on}><div>{p.value}</div></ValueCell>
                    <CheckCell>{p.check && <Check type="checkbox" aria-label={`${p.name} 附加`} />}</CheckCell>
                  </tr>
                );
              })}
            </tbody>
          </Table>
        </div>
        <Scroll>
          <button aria-label="向上"><Svg w={9} h={7}><path d="m1 6 3.500-4L8 6" stroke="#555" strokeWidth="2" /></Svg></button>
          <ScrollGap /><ScrollThumb />
          <button aria-label="向下"><Svg w={9} h={7}><path d="m1 1 3.500 4L8 1" stroke="#555" strokeWidth="2" /></Svg></button>
        </Scroll>
      </GridBox>
    </TabPage>
  </PropPanel>
);

const serif = '"Liberation Serif", "Noto Sans CJK SC", serif';
const Stirrup = () => (
  <StirrupWindow>
    <h2>箍筋图</h2>
    <Svg w={254} h={245}>
      <rect x=".5" y=".5" width="253" height="244" fill="#000" stroke="#fff" />
      <rect x="55.500" y="12.500" width="162" height="181" stroke="#fff" />
      <rect x="64" y="21" width="144" height="163" stroke="#f00" strokeWidth="2" />
      <g fill="#f00"><circle cx="68" cy="24" r="4" /><circle cx="204" cy="24" r="4" /><circle cx="68" cy="180" r="4" /><circle cx="204" cy="180" r="4" /></g>
      <path d="m194 29 8-7M199 35l8-7" stroke="#f00" strokeWidth="2" />
      <path d="m63 55 10-5" stroke="#fff" /><circle cx="63" cy="55" r="2" fill="#fff" />
      <g fill="#fff" fontFamily={serif}>
        <text x="72" y="50" fontSize="16">1#</text>
        <text x="51" y="118" fontSize="16" transform="rotate(-90 51 118)">H</text>
        <text x="128" y="208" fontSize="16">B</text>
        <text x="95" y="227" fontSize="20"><tspan fontFamily='"Liberation Mono", monospace' fontSize="18">2-1</tspan>型</text>
      </g>
    </Svg>
  </StirrupWindow>
);

const Overlays = () => (
  <>
    <SpeedBall>
      <Ball>63%</Ball>
      <SpeedPill>
        <SpeedRows>
          <Svg w={8} h={10}><path d="M4 9V2M1 4.500 4 1l3 3.500" stroke="#e2502f" strokeWidth="1.600" /></Svg><span>0K/s</span>
          <Svg w={8} h={10}><path d="M4 1v7M1 5.500 4 9l3-3.500" stroke="#249a4a" strokeWidth="1.600" /></Svg><span>0K/s</span>
        </SpeedRows>
        <Svg w={20} h={22}><circle cx="10" cy="12" r="9" fill="#3b7ddd" /><path d="M10 7v10M5 12h10" stroke="#fff" strokeWidth="2" /><circle cx="15" cy="5" r="4" fill="#d33" /></Svg>
      </SpeedPill>
    </SpeedBall>
    <ImeBar>
      <ImeLogo><SogouLogo /></ImeLogo>
      <Svg w={16}><path d="M2 15 7.200 1.500h1.600L14 15M4.500 10.500h7" stroke="#1a73c8" strokeWidth="2" /></Svg>
      <Svg w={16}><circle cx="5" cy="6" r="1.800" fill="#1a73c8" /><path d="M9.500 9.500h3c.3 2.500-.5 4-2.500 5l-.7-1 1.200-1.500h-1z" fill="#1a73c8" /></Svg>
      <Svg w={16}><circle cx="8" cy="8" r="7" stroke="#1a73c8" strokeWidth="1.800" /><path d="M5.500 5v2.500M10.500 5v2.500M4.500 9.500c1.500 3 5.500 3 7 0" stroke="#1a73c8" strokeWidth="1.500" /></Svg>
      <Svg w={16}><rect x="5" y="0" width="6" height="10" rx="3" fill="#1a73c8" /><path d="M2.500 7c0 7 11 7 11 0M8 12v3M5 15h6" stroke="#1a73c8" strokeWidth="1.500" /></Svg>
      <Svg w={16}><rect y="2" width="16" height="12" rx="1" fill="#1a73c8" /><path d="M2 5h12M2 8h12" stroke="#fff" strokeWidth="1.500" strokeDasharray="2 1" /><path d="M4 11.500h8" stroke="#fff" strokeWidth="1.500" /></Svg>
      <Svg w={18} h={16}><circle cx="7" cy="4" r="3.500" fill="#a9b6cf" /><path d="M1 14c0-7 12-7 12 0z" fill="#a9b6cf" /><path d="M7 8.500h4v2.500H7.500v3H11M12 8.500h4.500L14 14.500" stroke="#fff" strokeWidth="3" /><path d="M7 8.500h4v2.500H7.500v3H11M12 8.500h4.500L14 14.500" stroke="#8d9cba" strokeWidth="1.400" /></Svg>
      <Svg w={16}><path d="M5 1c1 2 5 2 6 0l5 3-2 4-2-1v8H4V7L2 8 0 4z" fill="#1a73c8" /></Svg>
      <Svg w={16}><path d="m2.500 13.500 7-7" stroke="#1a73c8" strokeWidth="3" strokeLinecap="round" /><path d="M15 5a4.200 4.200 0 1 1-4-4.500L9.500 3.500l2.500 2.500z" fill="#1a73c8" /></Svg>
    </ImeBar>
  </>
);

const Tasks = () => (
  <TaskBar>
    <TaskButton aria-label="开始"><Svg><path d="M0 2.500 6.500 1.500v6H0zM7.500 1.300 16 0v7.500H7.500zM0 8.500h6.500v6L0 13.500zM7.500 8.500H16V16l-8.500-1.300z" fill="#fff" /></Svg></TaskButton>
    <TaskButton aria-label="Cortana"><Svg><circle cx="7" cy="8" r="6.500" stroke="#fff" strokeWidth="2" /></Svg></TaskButton>
    <TaskSearch>
      <Svg w={20}><path d="M16 14.500a6.500 6.500 0 1 1 1-5H5" stroke="#2f93f0" strokeWidth="3" /><path d="M1.500 18c-3-5 9-17 17-16" stroke="#47a8fa" strokeWidth="1.500" /></Svg>
      <input placeholder="搜索网页和文件" aria-label="搜索网页和文件" />
      <Svg w={17}><circle cx="7.500" cy="7.500" r="6.500" stroke="#a4a6a7" strokeWidth="1.300" /><path d="m12 12 4.500 4.500" stroke="#a4a6a7" strokeWidth="1.300" /></Svg>
    </TaskSearch>
    <TaskButton aria-label="提醒"><Svg w={36} h={26}><path d="M15 8C9 4 2 8 2 14s5 9 10 8 7-6 5-9-8-3-8 1 4 4 5 1M12 8c-5 1-7 5-5 9s8 3 10 0" stroke="#ddd" strokeWidth="1.300" /><path d="M15 11c2-2 1-9 6-10 5 1 4 8 6 10zM19 12h4v2h-4z" fill="#e0a513" /></Svg></TaskButton>
    <TaskButton $run aria-label="360浏览器"><Svg w={22} h={24}><circle cx="11" cy="12" r="10" fill="#59bd2c" stroke="#e8f7df" /><path d="M16.500 15.500A6 6 0 1 1 17 11.500H6" stroke="#fff" strokeWidth="2.600" /><path d="M4 22C-1 17 9 2 21 1" stroke="#2e9a1c" strokeWidth="1.500" /></Svg></TaskButton>
    <TaskButton aria-label="文件资源管理器"><Svg w={22} h={19}><path d="M0 1h8l2 2h12v16H0z" fill="#fbe28f" /><path d="M0 1h8v2H0z" fill="#e8ac2c" /><path d="M4 10h14v9h-4v-5H8v5H4z" fill="#39b0e5" /></Svg></TaskButton>
    <TaskButton aria-label="邮件"><Svg w={24} h={20}><path d="M0 7 12 0l12 7v13H0z" fill="#fff" /><path d="M1 7h22l-9 5 3 4-6-4z" fill="#04181c" /></Svg></TaskButton>
    <TaskButton aria-label="Edge"><Svg w={22} h={22}><path d="M1 10C2 3 7 1 11 1c6 0 9 4 9 11H8c0 6 7 6 11 3.500v4C11 23 3.500 20 3.500 12.500 3.500 9 6 7 8 6 4 6 2 8 1 10zm7-1h6c0-4-5-4-6 0z" fill="#0f7ad8" /></Svg></TaskButton>
    <TaskButton $run aria-label="广联达"><Svg w={26} h={25}><path d="M24 2c-2 1-4 0-6 0C9-1 1 5 2 13c1 9 10 12 16 8 5-3 5-10 1-11s-7 2-6 4 4 2 4 0c1 4-8 5-8-2 0-6 7-6 10-6 3-1 4-2 5-4z" fill="#1f8df0" /><path d="M4 13c0-7 6-10 13-9" stroke="#6fd4ff" strokeWidth="1.500" /></Svg></TaskButton>
    <TaskButton $run $on aria-label="GGJ2013"><AppLogo size={24} /></TaskButton>
    <Tray>
      <TrayButton $w={28} aria-label="显示隐藏图标"><Svg w={13} h={8}><path d="m1 7 5.500-5.500L12 7" stroke="#fff" strokeWidth="1.300" /></Svg></TrayButton>
      <TrayButton $w={22} aria-label="网络"><Svg w={14} h={14}><path d="M1 12A11 11 0 0 1 12 1.500M4 12.500A8 8 0 0 1 12 5M7 13a5 5 0 0 1 5-5" stroke="#ddd" strokeWidth="1.400" /><circle cx="11" cy="12" r="1.600" fill="#fff" /></Svg></TrayButton>
      <TrayButton $w={22} aria-label="音量"><Svg w={17} h={14}><path d="M1 5h3l4-3.500v11L4 9H1z" stroke="#fff" /><path d="M10 4.500c1 1.500 1 3.500 0 5M12 3c2 2.500 2 5.500 0 8M14 1c3 3.500 3 8.500 0 12" stroke="#ccc" strokeWidth="1.100" /></Svg></TrayButton>
      <TrayButton $w={26} aria-label="输入法"><Svg w={14} h={14}><path d="M1 13.500 6.500 1h1L13 13.500M3.500 9h7" stroke="#fff" strokeWidth="2" /></Svg></TrayButton>
      <TrayButton $w={31} aria-label="搜狗"><SogouLogo size={16} /></TrayButton>
      <Clock>20:04<br />2018/12/10</Clock>
      <TrayButton $w={32} aria-label="通知"><Svg w={17} h={17}><path d="M.800 1.500h15.400v11H10.500l-2 2.500-2-2.500H.800z" stroke="#fff" strokeWidth="1.300" /></Svg></TrayButton>
      <DesktopEdge />
    </Tray>
  </TaskBar>
);

export default function App() {
  return (
    <Window>
      <GlobalStyle />
      <svg width="0" height="0" style={{ position: 'absolute' }} aria-hidden="true">
        <defs><linearGradient id="fold" x1="0" y1="0" x2="1" y2="1"><stop offset="0" stopColor="#fff0a8" /><stop offset="1" stopColor="#dc9a1c" /></linearGradient></defs>
      </svg>
      <TitleBar>
        <AppLogo />
        <Title>广联达BIM钢筋算量软件 GGJ2013 - [C:\Users\Administrator.PC-20141127NRHM\Desktop\湖北洲天西湖桥安置区工程.GGJ12]</Title>
        <WindowButton aria-label="最小化"><Svg w={10} h={10}><path d="M0 5.500h10" stroke="#000" /></Svg></WindowButton>
        <WindowButton aria-label="还原"><Svg w={10} h={10}><path d="M.500 2.500h7v7h-7zM2.500 2.500v-2h7v7h-2" stroke="#000" /></Svg></WindowButton>
        <WindowButton aria-label="关闭"><Svg w={10} h={10}><path d="m0 0 10 10M10 0 0 10" stroke="#000" /></Svg></WindowButton>
      </TitleBar>
      <MenuBar>
        {menus.map(m => <MenuButton key={m}>{m}</MenuButton>)}
        <MenuButton>{I.change}新建变更<Caret /></MenuButton>
        <MenuButton>{I.mascot}广小二</MenuButton>
        <MenuButton $push>{I.bubble}我要建议</MenuButton>
      </MenuBar>
      <MainTools />
      <Body>
        <Navigation />
        <Work>
          <ComponentTools />
          <Panels><ComponentList /><PropertyEditor /></Panels>
          <Stirrup />
          <Highlight />
        </Work>
      </Body>
      <StatusBar>
        <StatusCell $w={148} />
        <StatusCell $w={78}>层高:5.4m</StatusCell>
        <StatusCell $w={98}>底标高:-0.05m</StatusCell>
        <StatusCell $w={48}>0</StatusCell>
        <StatusCell>缺省为当前楼层顶标高</StatusCell>
        <StatusCell $w={70}>223 FPS</StatusCell>
      </StatusBar>
      <Tasks />
      <Overlays />
    </Window>
  );
}
